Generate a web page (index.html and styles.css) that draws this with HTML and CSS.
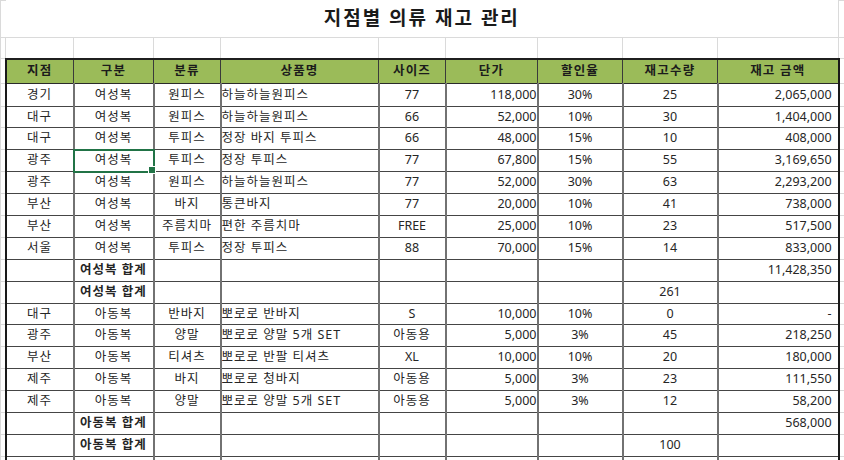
FILE: index.html
```html
<!DOCTYPE html>
<html lang="ko">
<head>
<meta charset="utf-8">
<title>지점별 의류 재고 관리</title>
<link rel="stylesheet" href="styles.css">
</head>
<body>
<table class="sheet">
  <colgroup>
    <col class="w-a"><col class="w1"><col class="w2"><col class="w3"><col class="w4"><col class="w5"><col class="w6"><col class="w7"><col class="w8"><col class="w9"><col class="w-z">
  </colgroup>
  <tr class="r-title">
    <td class="g ga"></td>
    <td class="title" colspan="9">지점별 의류 재고 관리</td>
    <td class="g"></td>
  </tr>
  <tr class="r-blank">
    <td class="g ga"></td>
    <td class="g"></td><td class="g"></td><td class="g"></td><td class="g"></td><td class="g"></td><td class="g"></td><td class="g"></td><td class="g"></td><td class="g"></td>
    <td class="g"></td>
  </tr>
  <tr class="r-head">
    <td class="g"></td>
    <td class="h first">지점</td><td class="h">구분</td><td class="h">분류</td><td class="h">상품명</td><td class="h">사이즈</td><td class="h">단가</td><td class="h">할인율</td><td class="h">재고수량</td><td class="h last">재고 금액</td>
    <td class="g"></td>
  </tr>
  <tr class="r23">
    <td class="g"></td>
    <td class="d first t">경기</td><td class="d t">여성복</td><td class="d t">원피스</td><td class="d n">하늘하늘원피스</td><td class="d c">77</td><td class="d r lo">118,000</td><td class="d c lo3">30%</td><td class="d c">25</td><td class="d r last">2,065,000</td>
    <td class="g"></td>
  </tr>
  <tr class="r21">
    <td class="g"></td>
    <td class="d first t">대구</td><td class="d t">여성복</td><td class="d t">원피스</td><td class="d n">하늘하늘원피스</td><td class="d c">66</td><td class="d r lo">52,000</td><td class="d c">10%</td><td class="d c">30</td><td class="d r last">1,404,000</td>
    <td class="g"></td>
  </tr>
  <tr class="r22">
    <td class="g"></td>
    <td class="d first t">대구</td><td class="d t">여성복</td><td class="d t">투피스</td><td class="d n">정장 바지 투피스</td><td class="d c">66</td><td class="d r lo">48,000</td><td class="d c lo">15%</td><td class="d c">10</td><td class="d r last">408,000</td>
    <td class="g"></td>
  </tr>
  <tr class="r22">
    <td class="g"></td>
    <td class="d first t">광주</td><td class="d t sel">여성복</td><td class="d t">투피스</td><td class="d n">정장 투피스</td><td class="d c">77</td><td class="d r lo">67,800</td><td class="d c lo">15%</td><td class="d c">55</td><td class="d r last">3,169,650</td>
    <td class="g"></td>
  </tr>
  <tr class="r22">
    <td class="g"></td>
    <td class="d first t">광주</td><td class="d t">여성복</td><td class="d t">원피스</td><td class="d n">하늘하늘원피스</td><td class="d c">77</td><td class="d r lo">52,000</td><td class="d c lo">30%</td><td class="d c">63</td><td class="d r last">2,293,200</td>
    <td class="g"></td>
  </tr>
  <tr class="r22">
    <td class="g"></td>
    <td class="d first t">부산</td><td class="d t">여성복</td><td class="d t">바지</td><td class="d n">통큰바지</td><td class="d c">77</td><td class="d r">20,000</td><td class="d c">10%</td><td class="d c">41</td><td class="d r last">738,000</td>
    <td class="g"></td>
  </tr>
  <tr class="r22">
    <td class="g"></td>
    <td class="d first t">부산</td><td class="d t">여성복</td><td class="d t">주름치마</td><td class="d n">편한 주름치마</td><td class="d c">FREE</td><td class="d r">25,000</td><td class="d c">10%</td><td class="d c">23</td><td class="d r last">517,500</td>
    <td class="g"></td>
  </tr>
  <tr class="r22">
    <td class="g"></td>
    <td class="d first t">서울</td><td class="d t">여성복</td><td class="d t">투피스</td><td class="d n">정장 투피스</td><td class="d c">88</td><td class="d r">70,000</td><td class="d c">15%</td><td class="d c">14</td><td class="d r last">833,000</td>
    <td class="g"></td>
  </tr>
  <tr class="r22">
    <td class="g"></td>
    <td class="d first"></td><td class="d t b">여성복 합계</td><td class="d"></td><td class="d"></td><td class="d"></td><td class="d"></td><td class="d"></td><td class="d"></td><td class="d r last">11,428,350</td>
    <td class="g"></td>
  </tr>
  <tr class="r22">
    <td class="g"></td>
    <td class="d first"></td><td class="d t b">여성복 합계</td><td class="d"></td><td class="d"></td><td class="d"></td><td class="d"></td><td class="d"></td><td class="d c">261</td><td class="d last"></td>
    <td class="g"></td>
  </tr>
  <tr class="r21">
    <td class="g"></td>
    <td class="d first t">대구</td><td class="d t">아동복</td><td class="d t">반바지</td><td class="d n">뽀로로 반바지</td><td class="d c">S</td><td class="d r lo3">10,000</td><td class="d c lo3">10%</td><td class="d c">0</td><td class="d r last dash">-</td>
    <td class="g"></td>
  </tr>
  <tr class="r22">
    <td class="g"></td>
    <td class="d first t">광주</td><td class="d t">아동복</td><td class="d t">양말</td><td class="d n">뽀로로 양말 5개 SET</td><td class="d t lo">아동용</td><td class="d r lo">5,000</td><td class="d c lo3">3%</td><td class="d c">45</td><td class="d r last">218,250</td>
    <td class="g"></td>
  </tr>
  <tr class="r22">
    <td class="g"></td>
    <td class="d first t">부산</td><td class="d t">아동복</td><td class="d t">티셔츠</td><td class="d n">뽀로로 반팔 티셔츠</td><td class="d c">XL</td><td class="d r">10,000</td><td class="d c">10%</td><td class="d c">20</td><td class="d r last">180,000</td>
    <td class="g"></td>
  </tr>
  <tr class="r22">
    <td class="g"></td>
    <td class="d first t">제주</td><td class="d t">아동복</td><td class="d t">바지</td><td class="d n">뽀로로 청바지</td><td class="d t lo">아동용</td><td class="d r">5,000</td><td class="d c lo3">3%</td><td class="d c">23</td><td class="d r last">111,550</td>
    <td class="g"></td>
  </tr>
  <tr class="r22">
    <td class="g"></td>
    <td class="d first t">제주</td><td class="d t">아동복</td><td class="d t">양말</td><td class="d n">뽀로로 양말 5개 SET</td><td class="d t lo">아동용</td><td class="d r">5,000</td><td class="d c lo3">3%</td><td class="d c">12</td><td class="d r last">58,200</td>
    <td class="g"></td>
  </tr>
  <tr class="r22">
    <td class="g"></td>
    <td class="d first"></td><td class="d t b">아동복 합계</td><td class="d"></td><td class="d"></td><td class="d"></td><td class="d"></td><td class="d"></td><td class="d"></td><td class="d r last">568,000</td>
    <td class="g"></td>
  </tr>
  <tr class="r22">
    <td class="g"></td>
    <td class="d first"></td><td class="d t b">아동복 합계</td><td class="d"></td><td class="d"></td><td class="d"></td><td class="d"></td><td class="d"></td><td class="d c">100</td><td class="d last"></td>
    <td class="g"></td>
  </tr>
  <tr class="r22">
    <td class="g"></td>
    <td class="d first"></td><td class="d"></td><td class="d"></td><td class="d"></td><td class="d"></td><td class="d"></td><td class="d"></td><td class="d"></td><td class="d last"></td>
    <td class="g"></td>
  </tr>
</table>
</body>
</html>
```
FILE: styles.css
```css
* { box-sizing: border-box; }
html, body { margin: 0; padding: 0; background: #ffffff; }
body {
  width: 844px;
  height: 460px;
  overflow: hidden;
  font-family: "Noto Sans", "Noto Sans CJK KR", sans-serif;
  font-size: 12.5px;
  color: #262626;
}
.sheet {
  border-collapse: collapse;
  table-layout: fixed;
  width: 844px;
}
.w-a { width: 5px; }
.w1 { width: 68px; }
.w2 { width: 80px; }
.w3 { width: 67px; }
.w4 { width: 158px; }
.w5 { width: 67px; }
.w6 { width: 92px; }
.w7 { width: 85px; }
.w8 { width: 95px; }
.w9 { width: 121px; }
.w-z { width: 6px; }

.sheet td {
  padding: 0;
  white-space: nowrap;
  overflow: hidden;
  line-height: 1;
  vertical-align: middle;
}
.r-title td { height: 37px; }
.r-blank td { height: 21px; }
.r-head td { height: 25px; }
.r23 td { height: 23px; }
.r22 td { height: 22px; }
.r21 td { height: 21px; }

.g { border: 1px solid #dadada; }
.ga { border-right: none; }
.title {
  border-bottom: 1px solid #dadada;
  text-align: center;
  font-weight: 700;
  font-size: 19px;
  letter-spacing: 2px;
  color: #1a1a1a;
}

.h {
  background: #9bbb59;
  border-top: 2px solid #1f1f1f;
  border-bottom: 1px solid #2a2a2a;
  border-left: 1px solid #3a3a3a;
  border-right: 1px solid #3a3a3a;
  text-align: center;
  font-weight: 700;
  font-size: 12.5px;
  letter-spacing: 1.2px;
  color: #1c1c1c;
}
.d {
  border-top: 1px solid #454545;
  border-bottom: 1px solid #454545;
  border-left: 2px solid #727272;
  border-right: 2px solid #727272;
}
.h.first, .d.first { border-left: 2px solid #1a1a1a; }
.h.last, .d.last { border-right: 2px solid #1a1a1a; }

.t { text-align: center; letter-spacing: 1px; }
.c { text-align: center; }
.r { text-align: right; padding-right: 7px; }
.d.last.r { padding-right: 6px; }
.dash { padding-right: 8px; }
.n { text-align: left; padding-left: 2px; padding-top: 4px; letter-spacing: 1px; }
.lo { padding-top: 4px; }
.lo3 { padding-top: 6px; }
.b { font-weight: 700; letter-spacing: 1px; }

.sel {
  position: relative;
  overflow: visible;
  outline: 2px solid #217346;
  outline-offset: -1px;
}
.sheet td.sel { overflow: visible; }
.sel::after {
  content: "";
  position: absolute;
  right: -3px;
  bottom: -3px;
  width: 6px;
  height: 6px;
  background: #217346;
  border: 1px solid #ffffff;
}
```
